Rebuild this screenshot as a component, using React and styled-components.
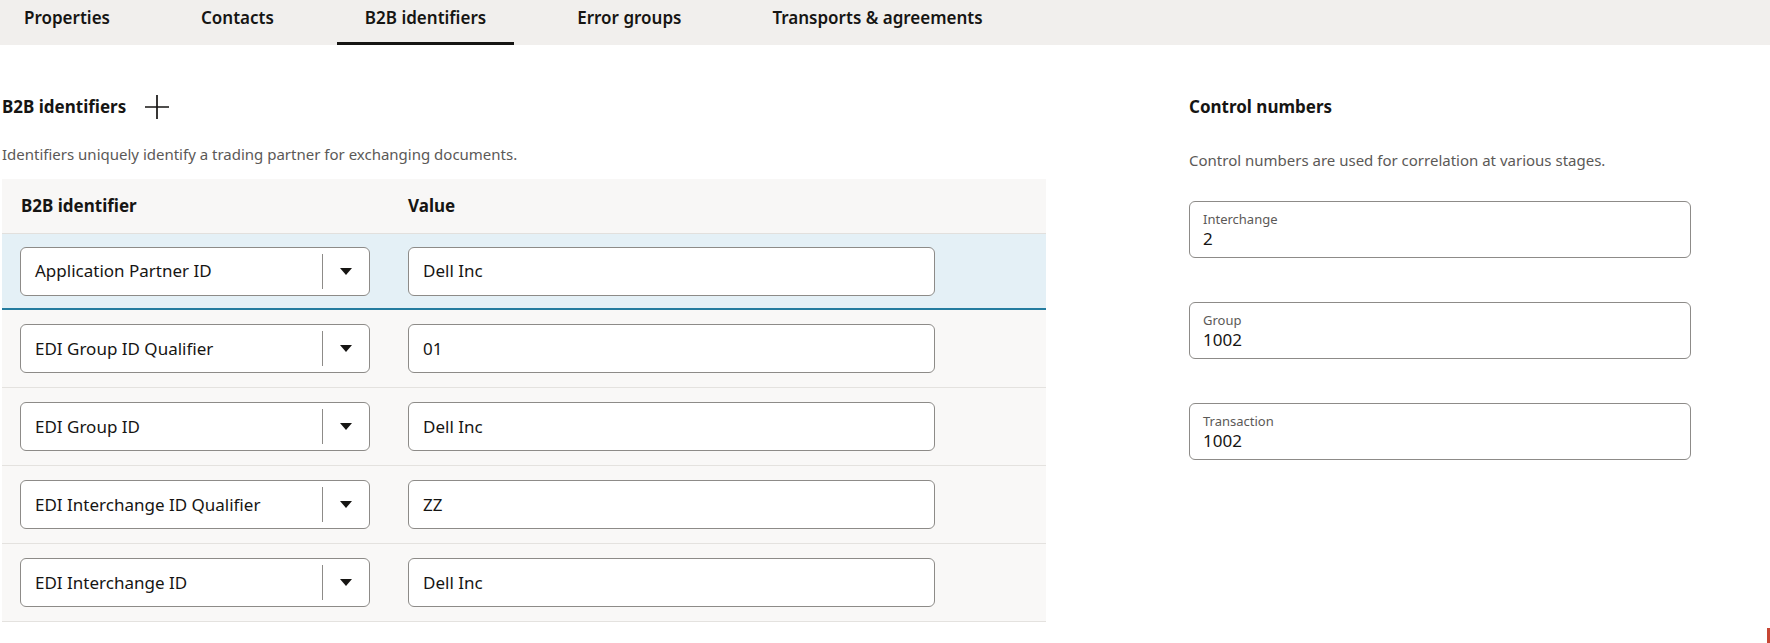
import React from "react";
import styled, { createGlobalStyle } from "styled-components";

const GlobalStyle = createGlobalStyle`
  html, body { margin: 0; padding: 0; background: #ffffff; overflow: hidden; }
  body {
    font-family: "Noto Sans", "Open Sans", "Liberation Sans", sans-serif;
    color: #161513;
  }
  * { box-sizing: border-box; }
`;

const Page = styled.div`
  width: 1770px;
  min-height: 643px;
  display: flex;
  flex-direction: column;
`;

const TabBar = styled.nav`
  height: 45px;
  background: #f1efed;
  display: flex;
  gap: 35px;
  padding-left: 0;
`;

const Tab = styled.div`
  height: 45px;
  padding: 6px 28px 0;
  font-size: 17px;
  font-weight: 600;
  line-height: 24px;
  color: #161513;
  border-bottom: 3px solid ${(p) => (p.$active ? "#161513" : "transparent")};
  white-space: nowrap;

  &:first-child {
    padding-left: 24px;
  }
`;

const Content = styled.div`
  display: grid;
  grid-template-columns: 1044px 502px;
  column-gap: 143px;
  padding: 50px 0 0 2px;
`;

const Section = styled.section`
  display: flex;
  flex-direction: column;
`;

const HeadingRow = styled.div`
  display: flex;
  align-items: center;
  gap: 18px;
  height: 24px;
`;

const Heading = styled.h2`
  margin: 0;
  font-size: 17px;
  font-weight: 700;
  line-height: 24px;
`;

const IconButton = styled.button`
  border: 0;
  background: transparent;
  padding: 0;
  width: 26px;
  height: 26px;
  display: flex;
  align-items: center;
  justify-content: center;
  color: #161513;
`;

const Description = styled.p`
  margin: ${(p) => p.$mt}px 0 0;
  font-size: 15px;
  line-height: 20px;
  color: #5b5957;
`;

const Table = styled.div`
  margin-top: 15px;
  display: flex;
  flex-direction: column;
  background: #f9f8f7;
`;

const HeaderRow = styled.div`
  height: 55px;
  display: flex;
  align-items: center;
  gap: 38px;
  padding-left: 19px;
  border-bottom: 1px solid #e2e0dd;
  background: #f8f7f6;
`;

const HeaderCell = styled.div`
  width: ${(p) => p.$w}px;
  font-size: 17px;
  font-weight: 700;
  line-height: 24px;
`;

const Row = styled.div`
  height: ${(p) => (p.$selected ? 76 : 78)}px;
  display: flex;
  align-items: center;
  gap: 38px;
  padding-left: 18px;
  background: ${(p) => (p.$selected ? "#e4f0f6" : "#f9f8f7")};
  border-bottom: ${(p) => (p.$selected ? "2px solid #247c9f" : "1px solid #e4e2df")};
`;

const Field = styled.div`
  width: ${(p) => p.$w}px;
  height: 49px;
  background: #ffffff;
  border: 1px solid #8d8b88;
  border-radius: 6px;
  display: flex;
  align-items: center;
  font-size: 17px;
  line-height: 24px;
`;

const FieldText = styled.span`
  flex: 1;
  padding-left: 14px;
  white-space: nowrap;
`;

const Divider = styled.span`
  width: 1px;
  align-self: stretch;
  margin: 6px 0;
  background: #8d8b88;
`;

const ArrowBox = styled.span`
  width: 46px;
  display: flex;
  align-items: center;
  justify-content: center;
`;

const ControlField = styled.div`
  height: 57px;
  margin-top: ${(p) => p.$mt}px;
  border: 1px solid #8d8b88;
  border-radius: 6px;
  padding: 9px 13px 0;
  display: flex;
  flex-direction: column;
`;

const ControlLabel = styled.span`
  font-size: 13px;
  line-height: 16px;
  color: #5b5957;
`;

const ControlValue = styled.span`
  font-size: 17px;
  line-height: 24px;
  color: #161513;
`;

const CornerMark = styled.div`
  position: fixed;
  right: 0;
  bottom: 0;
  width: 3px;
  height: 15px;
  background: #c74634;
`;

const tabs = [
  "Properties",
  "Contacts",
  "B2B identifiers",
  "Error groups",
  "Transports & agreements",
];

const rows = [
  ["Application Partner ID", "Dell Inc"],
  ["EDI Group ID Qualifier", "01"],
  ["EDI Group ID", "Dell Inc"],
  ["EDI Interchange ID Qualifier", "ZZ"],
  ["EDI Interchange ID", "Dell Inc"],
];

const controls = [
  ["Interchange", "2"],
  ["Group", "1002"],
  ["Transaction", "1002"],
];

const Plus = () => (
  <svg width="26" height="26" viewBox="0 0 26 26" fill="none">
    <path d="M13 1v24M1 13h24" stroke="#161513" strokeWidth="1.7" />
  </svg>
);

const Caret = () => (
  <svg width="12" height="7" viewBox="0 0 12 7">
    <path d="M0 0h12L6 7z" fill="#161513" />
  </svg>
);

export default function App() {
  return (
    <Page>
      <GlobalStyle />
      <TabBar>
        {tabs.map((t) => (
          <Tab key={t} $active={t === "B2B identifiers"}>
            {t}
          </Tab>
        ))}
      </TabBar>
      <Content>
        <Section>
          <HeadingRow>
            <Heading>B2B identifiers</Heading>
            <IconButton aria-label="Add">
              <Plus />
            </IconButton>
          </HeadingRow>
          <Description $mt={25}>
            Identifiers uniquely identify a trading partner for exchanging documents.
          </Description>
          <Table>
            <HeaderRow>
              <HeaderCell $w={349}>B2B identifier</HeaderCell>
              <HeaderCell $w={526}>Value</HeaderCell>
            </HeaderRow>
            {rows.map(([id, val], i) => (
              <Row key={id} $selected={i === 0}>
                <Field $w={350}>
                  <FieldText>{id}</FieldText>
                  <Divider />
                  <ArrowBox>
                    <Caret />
                  </ArrowBox>
                </Field>
                <Field $w={527}>
                  <FieldText>{val}</FieldText>
                </Field>
              </Row>
            ))}
          </Table>
        </Section>
        <Section>
          <HeadingRow>
            <Heading>Control numbers</Heading>
          </HeadingRow>
          <Description $mt={31}>
            Control numbers are used for correlation at various stages.
          </Description>
          {controls.map(([label, value], i) => (
            <ControlField key={label} $mt={i === 0 ? 31 : 44}>
              <ControlLabel>{label}</ControlLabel>
              <ControlValue>{value}</ControlValue>
            </ControlField>
          ))}
        </Section>
      </Content>
      <CornerMark />
    </Page>
  );
}
